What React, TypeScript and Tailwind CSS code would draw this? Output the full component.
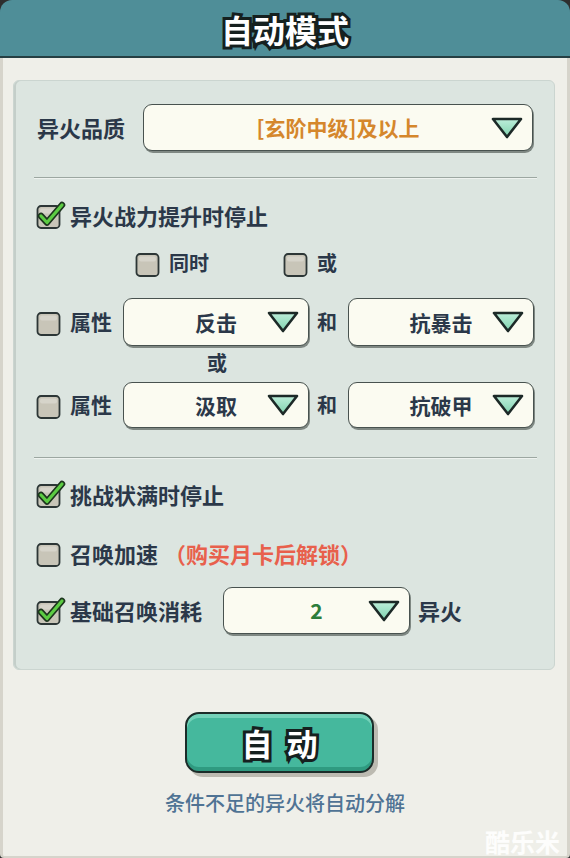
const stroke = "[paint-order:stroke_fill] [-webkit-text-stroke:6px_#15201f]";

function CheckBox({ checked = false }: { checked?: boolean }) {
  return (
    <svg width="30" height="28" viewBox="0 0 30 28" className="shrink-0">
      <rect x="1.5" y="5" width="22" height="22" rx="3.5" fill="#c8c5b8" stroke="#2c3636" strokeWidth="1.8" />
      <rect x="4" y="7.5" width="17" height="5" rx="2" fill="#d6d4ca" />
      {checked && (
        <>
          <path d="M5 15 L11 21.5 L26 4" fill="none" stroke="#1c351d" strokeWidth="6.5" strokeLinecap="round" strokeLinejoin="round" />
          <path d="M5 15 L11 21.5 L26 4" fill="none" stroke="#5ccc43" strokeWidth="3.2" strokeLinecap="round" strokeLinejoin="round" />
        </>
      )}
    </svg>
  );
}

function Triangle() {
  return (
    <svg width="36" height="26" viewBox="0 0 36 26">
      <defs>
        <linearGradient id="tri" x1="0" y1="0" x2="0" y2="1">
          <stop offset="0" stopColor="#bdeeda" />
          <stop offset="1" stopColor="#7fd2ae" />
        </linearGradient>
      </defs>
      <path d="M4 4 L32 4 L18 22 Z" fill="url(#tri)" stroke="#1c2927" strokeWidth="2.6" strokeLinejoin="round" />
    </svg>
  );
}

function Select({ value, className, color = "text-[#2b3849]" }: { value: string; className: string; color?: string }) {
  return (
    <div className={`grid shrink-0 items-center rounded-[9px] border-[1.5px] border-[#48524f] bg-[#fbfbf1] shadow-[1px_2px_0_#7f8883] ${className}`}>
      <span className={`col-start-1 row-start-1 justify-self-center whitespace-nowrap text-[21px] font-bold leading-none ${color}`}>{value}</span>
      <span className="col-start-1 row-start-1 mr-[7px] flex justify-self-end">
        <Triangle />
      </span>
    </div>
  );
}

function Divider() {
  return <div className="-ml-[2px] -mr-[4px] h-[2px] border-t border-[#9ca7a1] bg-[#eef2ef]" />;
}

export default function App() {
  return (
    <div className="relative h-[858px] w-[570px] overflow-hidden bg-[#2e2e2e] font-['Noto_Sans_CJK_SC','Noto_Sans',sans-serif] text-[#2b3849]">
      <header className="flex h-[58px] items-center justify-center rounded-t-[12px] border-b-[2px] border-[#263f43] bg-[#4f8e98] pt-[2px]">
        <h1 className={`text-[32px] font-bold leading-none text-white ${stroke}`}>自动模式</h1>
      </header>

      <main className="flex h-[800px] flex-col rounded-b-[4px] border-x-[3px] border-b-[2px] border-[#d6d4cb] bg-[#efefe9]">
        <section className="mt-[22px] ml-[10px] mr-[12px] rounded-[6px] border border-[#cbd5d0] bg-[#dce5e0] pb-[35px] pl-[22px] pr-[21px] pt-[23px] shadow-[inset_2px_0_0_#c4cec9]">
          <div className="flex items-center">
            <span className="ml-[1px] w-[106px] shrink-0 whitespace-nowrap text-[22px] font-bold">异火品质</span>
            <Select value="[玄阶中级]及以上" color="text-[#d5872c]" className="h-[47px] flex-1" />
          </div>

          <div className="mt-[26px]">
            <Divider />
          </div>

          <div className="mt-[22px] flex h-[28px] items-center gap-[4px]">
            <CheckBox checked />
            <span className="text-[22px] font-bold">异火战力提升时停止</span>
          </div>

          <div className="mt-[22px] flex h-[24px] items-center">
            <div className="ml-[99px] flex items-center gap-[4px]">
              <CheckBox />
              <span className="text-[20px] font-bold">同时</span>
            </div>
            <div className="ml-[74px] flex items-center gap-[4px]">
              <CheckBox />
              <span className="text-[20px] font-bold">或</span>
            </div>
          </div>

          <div className="mt-[23px] flex items-center">
            <CheckBox />
            <span className="ml-[4px] w-[44px] shrink-0 whitespace-nowrap text-[21px] font-bold">属性</span>
            <Select value="反击" className="ml-[9px] h-[48px] w-[186px]" />
            <span className="ml-[8px] w-[21px] shrink-0 text-[20px] font-bold">和</span>
            <Select value="抗暴击" className="ml-[10px] h-[48px] w-[186px]" />
          </div>

          <div className="mt-[6px] ml-[171px] h-[22px] text-[20px] font-bold leading-[22px]">或</div>

          <div className="mt-[8px] flex items-center">
            <CheckBox />
            <span className="ml-[4px] w-[44px] shrink-0 whitespace-nowrap text-[21px] font-bold">属性</span>
            <Select value="汲取" className="ml-[9px] h-[46px] w-[186px]" />
            <span className="ml-[8px] w-[21px] shrink-0 text-[20px] font-bold">和</span>
            <Select value="抗破甲" className="ml-[10px] h-[46px] w-[186px]" />
          </div>

          <div className="mt-[29px]">
            <Divider />
          </div>

          <div className="mt-[21px] flex h-[28px] items-center gap-[4px]">
            <CheckBox checked />
            <span className="text-[22px] font-bold">挑战状满时停止</span>
          </div>

          <div className="mt-[31px] flex h-[28px] items-center">
            <CheckBox />
            <span className="ml-[4px] text-[22px] font-bold">召唤加速</span>
            <span className="ml-[6px] text-[22px] font-bold text-[#e8604c]">（购买月卡后解锁）</span>
          </div>

          <div className="mt-[20px] flex items-center">
            <CheckBox checked />
            <span className="ml-[4px] w-[153px] shrink-0 whitespace-nowrap text-[22px] font-bold">基础召唤消耗</span>
            <Select value="2" color="text-[#2c7d3b]" className="h-[47px] w-[187px]" />
            <span className="ml-[8px] text-[22px] font-bold">异火</span>
          </div>
        </section>

        <div className="mt-[42px] ml-[182px] flex h-[61px] w-[189px] items-center justify-center rounded-[14px] border-[2.5px] border-[#1b2c29] bg-[#45b89d] shadow-[inset_0_4px_0_#74d2b9,inset_0_-4px_0_#2f9a80,4px_4px_0_#bcbab1]">
          <span className={`pl-[14px] text-[31px] font-bold leading-none tracking-[14px] text-white ${stroke}`}>自动</span>
        </div>

        <p className="mt-[18px] text-center text-[20px] font-medium leading-[24px] text-[#4f7394]">条件不足的异火将自动分解</p>
      </main>

      <span className="absolute bottom-[4px] right-[10px] text-[25px] font-bold leading-none text-white/85">酷乐米</span>
    </div>
  );
}
